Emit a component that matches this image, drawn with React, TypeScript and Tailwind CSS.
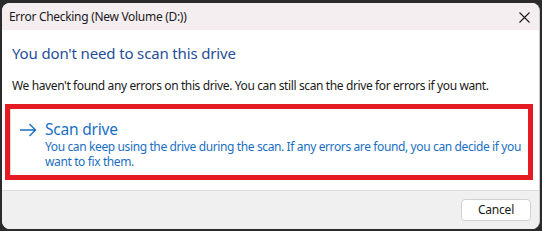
import React from 'react'

const font = { fontFamily: '"Segoe UI", "Noto Sans", sans-serif' }

const App: React.FC = () => {
  return (
    <div className="w-[542px] h-[231px] bg-[#2b2b2b] pt-[3px] pl-[2px] pr-[2px] pb-[2px]" style={font}>
      <div className="flex h-[226px] flex-col overflow-hidden rounded-[8px] border-r border-[#c9c9c9] bg-white">
        {/* title bar */}
        <div className="flex h-[27px] items-center justify-between bg-[#f5eef1] pl-[7px] pr-[9px]">
          <span className="text-[12px] tracking-[-0.3px] text-[#1a1a1a]">Error Checking (New Volume (D:))</span>
          <svg width="11" height="11" viewBox="0 0 11 11" className="mt-[1px]">
            <path d="M0.5 0.5 L10.5 10.5 M10.5 0.5 L0.5 10.5" stroke="#1a1a1a" strokeWidth="1.1" />
          </svg>
        </div>

        {/* body */}
        <div className="flex-1 bg-white pl-[3px] pr-[6px]">
          <h1 className="mt-[13px] pl-[7px] text-[15px] leading-[20px] tracking-[-0.15px] text-[#1f4e99]">
            You don't need to scan this drive
          </h1>
          <p className="mt-[15px] pl-[7px] text-[12px] leading-[16px] tracking-[-0.38px] text-[#1a1a1a]">
            We haven't found any errors on this drive. You can still scan the drive for errors if you want.
          </p>

          <div className="mt-[10px] border-[5px] border-[#e51b24]">
            <div className="flex h-[66px] border-l border-[#d9d9d9] pl-[8px] pt-[10px]">
              <svg width="18" height="14" viewBox="0 0 18 14" className="mt-[4px] shrink-0">
                <path d="M1 7 H16.5 M10.5 1 L16.5 7 L10.5 13" stroke="#1a6fc4" strokeWidth="1.4" fill="none" />
              </svg>
              <div className="ml-[8px]">
                <div className="text-[15.5px] leading-[20px] tracking-[-0.2px] text-[#1a6fc4]">Scan drive</div>
                <div className="text-[12px] leading-[15px] tracking-[-0.38px] text-[#1a70c5]">
                  You can keep using the drive during the scan. If any errors are found, you can decide if you want to fix them.
                </div>
              </div>
            </div>
          </div>
        </div>

        {/* footer */}
        <div className="flex h-[39px] items-start justify-end border-t border-[#dcdcdc] bg-[#f0f0f0] pr-[8px] pt-[8px]">
          <button className="h-[22px] w-[70px] rounded-[4px] border border-[#d1d1d1] bg-white text-[12px] tracking-[-0.2px] text-[#1a1a1a]">
            Cancel
          </button>
        </div>
      </div>
    </div>
  )
}

export default App
